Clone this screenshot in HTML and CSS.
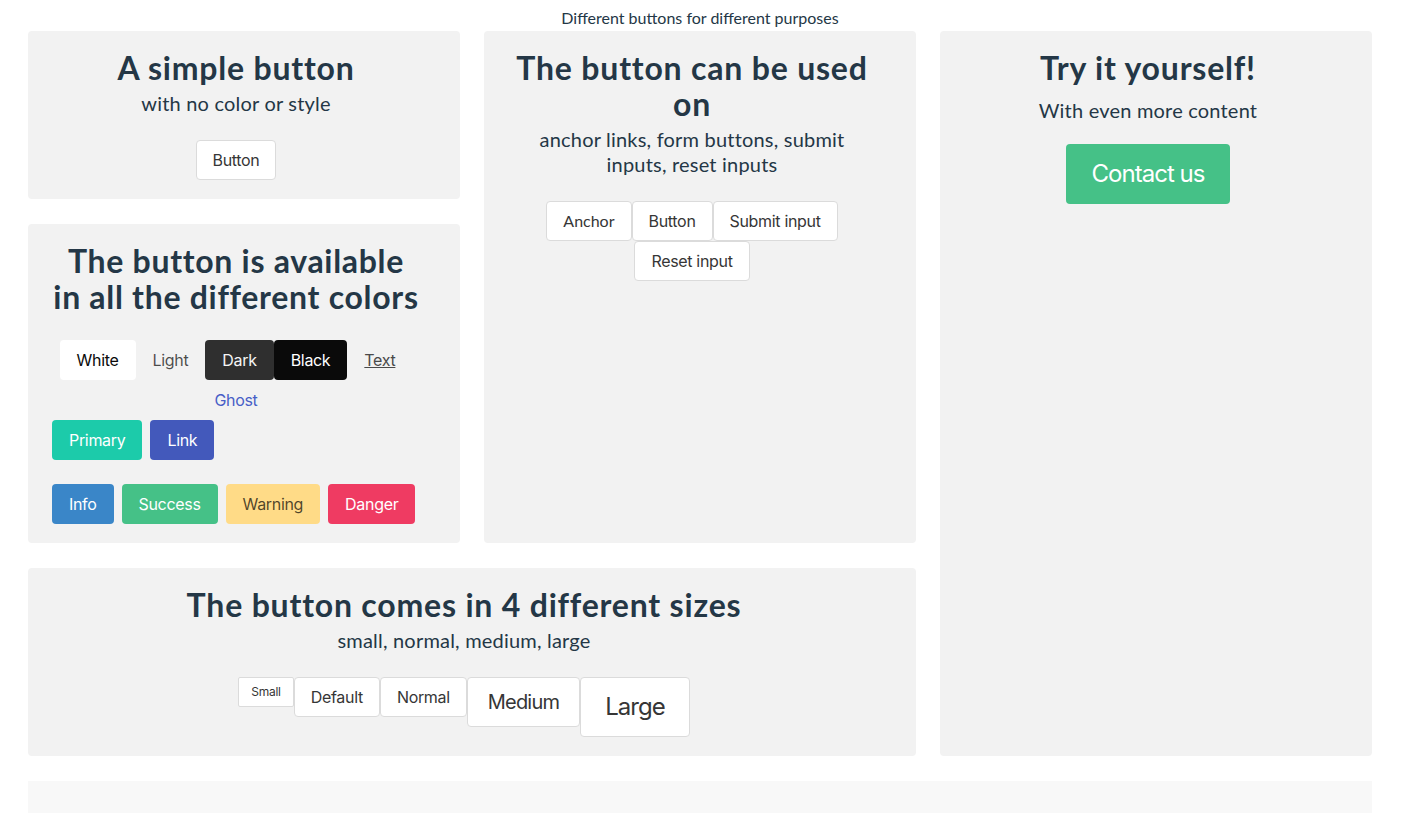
FILE: index.html
```html
<!DOCTYPE html>
<html lang="en">
<head>
<meta charset="utf-8">
<title>Buttons</title>
<link rel="stylesheet" href="styles.css">
</head>
<body>
<p class="caption">Different buttons for different purposes</p>
<main class="grid">
  <section class="card card-simple">
    <h1 class="title">A simple button</h1>
    <p class="subtitle">with no color or style</p>
    <div class="btns btns-center">
      <button class="btn">Button</button>
    </div>
  </section>

  <section class="card card-used">
    <h1 class="title">The button can be used on</h1>
    <p class="subtitle">anchor links, form buttons, submit inputs, reset inputs</p>
    <div class="btns btns-center">
      <a class="btn btn-anchor" href="#">Anchor</a>
      <button class="btn">Button</button>
      <input class="btn" type="submit" value="Submit input">
      <input class="btn" type="reset" value="Reset input">
    </div>
  </section>

  <section class="card card-try">
    <h1 class="title title-try">Try it yourself!</h1>
    <p class="lead">With even more content</p>
    <div class="btns btns-center">
      <button class="btn btn-large btn-success">Contact us</button>
    </div>
  </section>

  <section class="card card-colors">
    <h1 class="title title-colors">The button is available<br>in all the different colors</h1>
    <div class="btns btns-center">
      <button class="btn btn-white">White</button>
      <button class="btn btn-light">Light</button>
      <button class="btn btn-dark">Dark</button>
      <button class="btn btn-black">Black</button>
      <button class="btn btn-text">Text</button>
      <button class="btn btn-ghost">Ghost</button>
    </div>
    <div class="btns btns-gap">
      <button class="btn btn-primary">Primary</button>
      <button class="btn btn-link">Link</button>
    </div>
    <div class="btns btns-gap btns-spaced">
      <button class="btn btn-info">Info</button>
      <button class="btn btn-success">Success</button>
      <button class="btn btn-warning">Warning</button>
      <button class="btn btn-danger">Danger</button>
    </div>
  </section>

  <section class="card card-sizes">
    <h1 class="title">The button comes in 4 different sizes</h1>
    <p class="subtitle">small, normal, medium, large</p>
    <div class="btns btns-center btns-top">
      <button class="btn btn-small">Small</button>
      <button class="btn">Default</button>
      <button class="btn btn-normal">Normal</button>
      <button class="btn btn-medium">Medium</button>
      <button class="btn btn-large">Large</button>
    </div>
  </section>
</main>
<footer class="footer"></footer>
</body>
</html>
```

FILE: styles.css
```css
html, body {
  margin: 0;
  padding: 0;
  background: #ffffff;
}

body {
  font-family: Lato, "Noto Sans", sans-serif;
  color: #243746;
}

.caption {
  margin: 0 0 0 28px;
  padding-top: 6px;
  height: 25px;
  width: 1344px;
  line-height: 24px;
  font-size: 16px;
  text-align: center;
}

.grid {
  display: grid;
  grid-template-columns: repeat(3, 432px);
  column-gap: 24px;
  row-gap: 25px;
  margin-left: 28px;
  width: 1344px;
}

.card {
  background: #f2f2f2;
  border-radius: 4px;
  padding: 20px 40px 19px 24px;
  box-sizing: border-box;
  text-align: center;
}

.card-simple { grid-column: 1; grid-row: 1; }
.card-used { grid-column: 2; grid-row: 1 / span 2; }
.card-try { grid-column: 3; grid-row: 1 / span 3; }
.card-colors { grid-column: 1; grid-row: 2; }
.card-sizes { grid-column: 1 / span 2; grid-row: 3; }

.title {
  margin: -1px 0 25px;
  font-size: 32px;
  line-height: 36px;
  font-weight: 700;
  letter-spacing: 0.8px;
  color: #243746;
}

.title-colors {
  letter-spacing: 0.7px;
  margin-left: -8px;
  margin-right: -8px;
  white-space: nowrap;
}

.title + .subtitle {
  margin-top: -20px;
}

.subtitle {
  margin: 0 0 24px;
  font-size: 20px;
  line-height: 25px;
  font-weight: 400;
  letter-spacing: 0.2px;
  color: #243746;
}

.title-try {
  margin-bottom: 12px;
}

.lead {
  margin: 0 0 21px;
  font-size: 20px;
  line-height: 25px;
  letter-spacing: 0.2px;
  color: #243746;
}

.btns {
  display: flex;
  flex-wrap: wrap;
  align-items: center;
}

.btns-center {
  justify-content: center;
}

.btns-top {
  align-items: flex-start;
}

.btns-gap {
  gap: 8px;
}

.btns-spaced {
  margin-top: 24px;
}

.btn {
  -webkit-appearance: none;
  appearance: none;
  box-sizing: border-box;
  display: inline-flex;
  align-items: center;
  justify-content: center;
  height: 2.5em;
  padding: 0 1em;
  margin: 0;
  font-family: Inter, "Noto Sans", sans-serif;
  font-size: 16px;
  line-height: 1.5;
  letter-spacing: -0.02em;
  color: #363636;
  background: #ffffff;
  border: 1px solid #dbdbdb;
  border-radius: 4px;
  text-decoration: none;
  cursor: pointer;
  white-space: nowrap;
}

.btn-anchor {
  font-family: Lato, "Noto Sans", sans-serif;
  letter-spacing: 0;
}

.btn-white { background: #ffffff; border-color: transparent; color: #0a0a0a; }
.btn-light { background: #f2f2f2; border-color: transparent; color: rgba(0, 0, 0, 0.7); }
.btn-dark { background: #2f2f2f; border-color: transparent; color: #f5f5f5; }
.btn-black { background: #0a0a0a; border-color: transparent; color: #ffffff; }
.btn-text { background: transparent; border-color: transparent; color: #4a4a4a; text-decoration: underline; }
.btn-ghost { background: none; border-color: transparent; color: #485fc7; }
.btn-primary { background: #1ccbaa; border-color: transparent; color: #ffffff; }
.btn-link { background: #4359bb; border-color: transparent; color: #ffffff; }
.btn-info { background: #3a86c8; border-color: transparent; color: #ffffff; }
.btn-success { background: #45c187; border-color: transparent; color: #ffffff; }
.btn-warning { background: #ffdb87; border-color: transparent; color: rgba(0, 0, 0, 0.7); }
.btn-danger { background: #ef3b62; border-color: transparent; color: #ffffff; }

.btn-small { font-size: 12px; border-radius: 2px; }
.btn-normal { font-size: 16px; }
.btn-medium { font-size: 20px; letter-spacing: -0.04em; }
.btn-large { font-size: 24px; letter-spacing: -0.04em; }

.footer {
  margin: 25px 0 0 28px;
  width: 1344px;
  height: 168px;
  background: #f8f8f8;
}
```
